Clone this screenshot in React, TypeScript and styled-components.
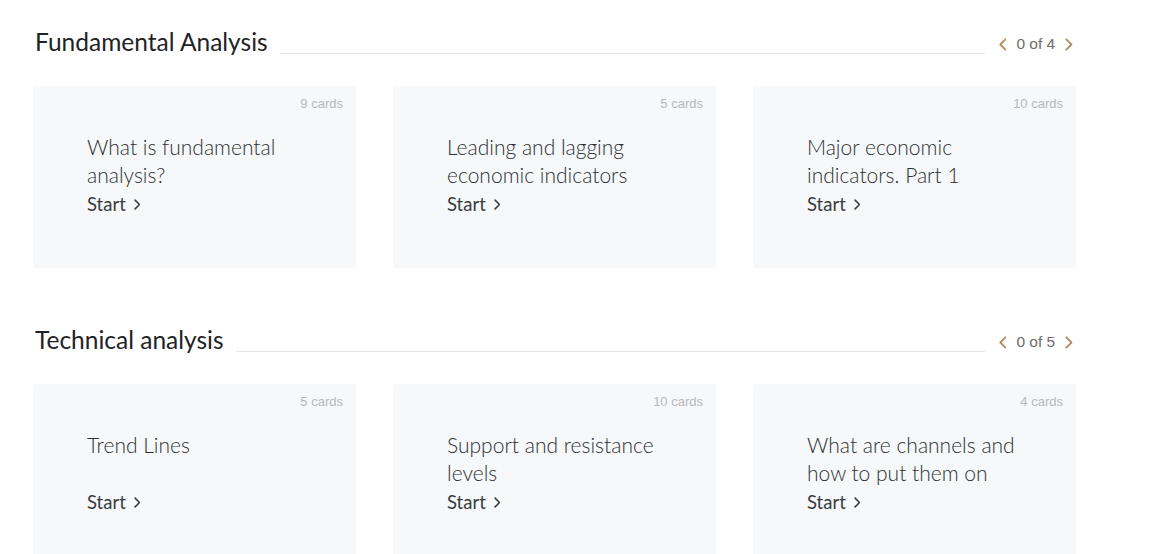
import React from "react";
import styled, { createGlobalStyle } from "styled-components";

const GlobalStyle = createGlobalStyle`
    html, body {
        margin: 0;
        padding: 0;
        background: #ffffff;
    }
    body {
        font-family: "Lato", "Open Sans", sans-serif;
        color: #2b2b2b;
        overflow: hidden;
    }
`;

const Page = styled.div`
    width: 1176px;
    height: 554px;
    padding: 27px 0 0 33px;
    box-sizing: border-box;
    display: flex;
    flex-direction: column;
    gap: 57px;
`;

const Section = styled.section`
    width: 1043px;
    display: flex;
    flex-direction: column;
    gap: 29px;
`;

const Header = styled.div`
    display: flex;
    align-items: flex-end;
    height: 30px;
`;

const Title = styled.h2`
    margin: 0 0 0 2px;
    align-self: flex-start;
    font-family: "Lato", sans-serif;
    font-weight: 400;
    font-size: 24.5px;
    line-height: 30px;
    color: #1f2326;
    white-space: nowrap;
`;

const Rule = styled.div`
    flex: 1;
    height: 1px;
    background: #e4e6e8;
    margin: 0 14px 3px 12px;
`;

const Pager = styled.div`
    display: flex;
    align-items: center;
    gap: 10px;
    height: 20px;
    align-self: center;
    margin-top: 4px;
    margin-right: 3px;
`;

const PagerText = styled.span`
    font-family: "Liberation Sans", Arial, sans-serif;
    font-size: 15.5px;
    color: #6d6d6d;
`;

const ArrowButton = styled.button`
    border: 0;
    background: none;
    padding: 0;
    display: flex;
    cursor: pointer;
    color: #b48c62;
`;

const Row = styled.div`
    display: grid;
    grid-template-columns: repeat(3, 323px);
    column-gap: 37px;
`;

const Card = styled.div`
    height: 182px;
    background: #f6f8f9;
    border-radius: 3px;
    box-sizing: border-box;
    padding: 10px 13px 0 54px;
    display: flex;
    flex-direction: column;
`;

const Count = styled.div`
    align-self: flex-end;
    font-family: "Liberation Sans", Arial, sans-serif;
    font-size: 13px;
    line-height: 16px;
    color: #b6b8ba;
`;

const CardTitle = styled.div`
    margin-top: 21px;
    min-height: 56px;
    max-width: 220px;
    font-family: "Lato", sans-serif;
    font-weight: 300;
    font-size: 21px;
    line-height: 28px;
    color: #2e3033;
`;

const Start = styled.a`
    font-family: "Lato", sans-serif;
    font-weight: 400;
    font-size: 18.5px;
    line-height: 30px;
    color: #3a3c3e;
    text-decoration: none;
    display: flex;
    align-items: center;
    gap: 8px;
`;

const Chevron = ({ dir, size = 14, width = 1.6 }: { dir: "left" | "right"; size?: number; width?: number }) => (
    <svg width={size * 0.6} height={size} viewBox="0 0 6 10" fill="none" stroke="currentColor" strokeWidth={width} strokeLinecap="round" strokeLinejoin="round">
        {dir === "left" ? <path d="M5 1 1 5l4 4" /> : <path d="M1 1l4 4-4 4" />}
    </svg>
);

const sections = [
    {
        title: "Fundamental Analysis",
        pages: 4,
        cards: [
            { count: 9, title: "What is fundamental analysis?" },
            { count: 5, title: "Leading and lagging economic indicators" },
            { count: 10, title: "Major economic indicators. Part 1" },
        ],
    },
    {
        title: "Technical analysis",
        pages: 5,
        cards: [
            { count: 5, title: "Trend Lines" },
            { count: 10, title: "Support and resistance levels" },
            { count: 4, title: "What are channels and how to put them on" },
        ],
    },
];

export default function App() {
    return (
        <>
            <GlobalStyle />
            <Page>
                {sections.map((s) => (
                    <Section key={s.title}>
                        <Header>
                            <Title>{s.title}</Title>
                            <Rule />
                            <Pager>
                                <ArrowButton aria-label="Previous">
                                    <Chevron dir="left" size={13} width={1.4} />
                                </ArrowButton>
                                <PagerText>0 of {s.pages}</PagerText>
                                <ArrowButton aria-label="Next">
                                    <Chevron dir="right" size={13} width={1.4} />
                                </ArrowButton>
                            </Pager>
                        </Header>
                        <Row>
                            {s.cards.map((c) => (
                                <Card key={c.title}>
                                    <Count>{c.count} cards</Count>
                                    <CardTitle>{c.title}</CardTitle>
                                    <Start href="#">
                                        Start <Chevron dir="right" size={11} width={1.4} />
                                    </Start>
                                </Card>
                            ))}
                        </Row>
                    </Section>
                ))}
            </Page>
        </>
    );
}
